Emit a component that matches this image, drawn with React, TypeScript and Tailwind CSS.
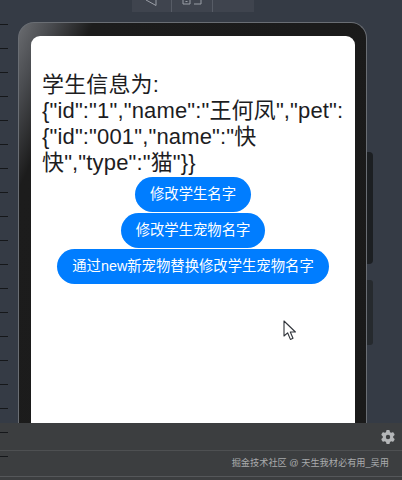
import { FaGear } from "react-icons/fa6";

const ticks = [24, 48, 72, 96, 120, 144, 168, 192, 216, 240, 264, 288, 312, 336, 360, 384, 408, 432, 456];
const buttons = ["修改学生名字", "修改学生宠物名字", "通过new新宠物替换修改学生宠物名字"];

function Cursor() {
  return (
    <svg width="15" height="21" viewBox="0 0 15 21" className="absolute left-[252px] top-[284px]">
      <path
        d="M1 1 L1 16 L4.6 12.8 L7.4 19.4 L10 18.2 L7.3 12 L12.4 12 Z"
        fill="#ffffff"
        stroke="#30343a"
        strokeWidth="1.1"
        strokeLinejoin="round"
      />
    </svg>
  );
}

function App() {
  return (
    <div
      className="relative flex h-[480px] w-[402px] flex-col overflow-hidden bg-[#353b45]"
      style={{ fontFamily: '"Liberation Sans", "Noto Sans CJK SC", sans-serif' }}
    >
      {/* ruler ticks */}
      {ticks.map((y) => (
        <div key={y} className="absolute left-0 z-10 h-px w-2 bg-[#15171a]" style={{ top: y }} />
      ))}

      <div className="flex h-[423px] flex-col overflow-hidden">
        {/* device toolbar */}
        <div className="ml-[132px] flex h-3 w-[122px] shrink-0 bg-[#3f444e]">
          <div className="flex w-10 justify-center border-r border-[#575c66]">
            <svg width="14" height="6" viewBox="0 0 14 6">
              <path d="M1 0 L11 5.5 L11 0" fill="none" stroke="#9a9ea6" strokeWidth="1" />
            </svg>
          </div>
          <div className="flex w-[41px] justify-center border-r border-[#575c66]">
            <svg width="20" height="5" viewBox="0 0 20 5">
              <path d="M1 0 V4 H8 V0 M3.5 1.5 H5.5 M12 4 H19 V0" fill="none" stroke="#9a9ea6" strokeWidth="1" />
            </svg>
          </div>
        </div>

        <div className="relative ml-[18px] mt-[10px] flex h-[411px] w-[356px] shrink-0">
          {/* device frame */}
          <div className="h-full w-[349px] shrink-0 rounded-t-[16px] border border-b-0 border-[#6a6e74] bg-[linear-gradient(114deg,#6a6c70_0%,#4a4c50_6%,#1c1c1c_14%,#1a1a1a_100%)] pl-3 pr-3 pt-[13px]">
            <div className="relative h-full w-[324px] rounded-t-[9px] bg-white pt-[36px]">
              <div className="pl-[11px] text-[22px] leading-[26px] tracking-[0.15px] text-[#1d1d1f]">
                <div>学生信息为:</div>
                <div className="whitespace-nowrap">{'{"id":"1","name":"王何凤","pet":'}</div>
                <div className="whitespace-nowrap">{'{"id":"001","name":"快'}</div>
                <div className="whitespace-nowrap">{'快","type":"猫"}}'}</div>
              </div>
              <div className="mt-px flex flex-col items-center gap-px">
                {buttons.map((label) => (
                  <button
                    key={label}
                    className="flex h-[35px] items-center rounded-full bg-[#007dff] px-[15px] text-[14.35px] text-white"
                  >
                    {label}
                  </button>
                ))}
              </div>
              <Cursor />
            </div>
          </div>
          {/* side buttons */}
          <div className="mt-[130px] flex w-[6px] shrink-0 flex-col gap-[16px]">
            <div className="h-[112px] rounded-r-[4px] bg-[#1c1f22]" />
            <div className="h-[65px] rounded-r-[3px] bg-[#262a2e]" />
          </div>
        </div>
      </div>

      {/* bottom panel */}
      <div className="flex h-[28px] items-center justify-end border-b border-[#4e5052] bg-[#3c3e40] pr-[7px]">
        <FaGear size={14} color="#b4b6b8" />
      </div>
      <div className="flex h-[26px] items-center justify-end border-b border-[#55575a] bg-[#3c3e40] pr-[13px] text-[9.2px] text-[#a9abad]">
        掘金技术社区 @ 天生我材必有用_吴用
      </div>
      <div className="flex-1 bg-[#3c3e40]" />
    </div>
  );
}

export default App;
